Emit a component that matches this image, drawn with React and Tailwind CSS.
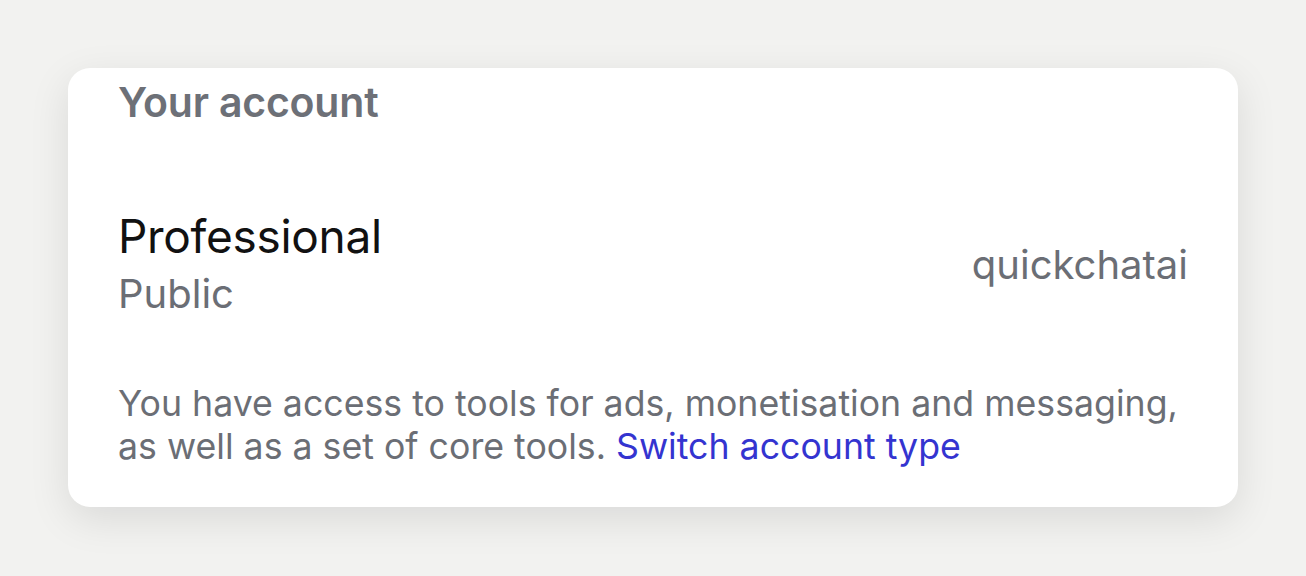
import React from 'react'

export default function App() {
  return (
    <div
      className="min-h-screen w-full bg-[#f2f2f0] pt-[68px] px-[68px]"
      style={{ fontFamily: 'Inter, "Noto Sans", sans-serif' }}
    >
      <div className="w-[1170px] rounded-[22px] bg-white pt-[10px] pb-[39px] px-[50px] shadow-[0_12px_40px_rgba(0,0,0,0.10)]">
        {/* Header */}
        <h2 className="text-[41px] leading-[48px] font-semibold text-[#6d7077] tracking-[-0.2px]">
          Your account
        </h2>

        {/* Account type row */}
        <div className="mt-[82px] flex items-center justify-between">
          <div className="flex flex-col">
            <span className="text-[46px] leading-[56px] text-[#111111] tracking-[-0.3px]">
              Professional
            </span>
            <span className="mt-[2px] text-[40px] leading-[56px] text-[#6b6e75]">
              Public
            </span>
          </div>
          <span className="text-[40px] leading-[48px] text-[#6b6e75]">quickchatai</span>
        </div>

        {/* Description */}
        <p className="mt-[60px] text-[35.7px] leading-[43px] text-[#6b6e75]">
          You have access to tools for ads, monetisation and messaging, as well as a set of core tools.{' '}
          <a href="#" className="text-[#3434d0]">
            Switch account type
          </a>
        </p>
      </div>
    </div>
  )
}
